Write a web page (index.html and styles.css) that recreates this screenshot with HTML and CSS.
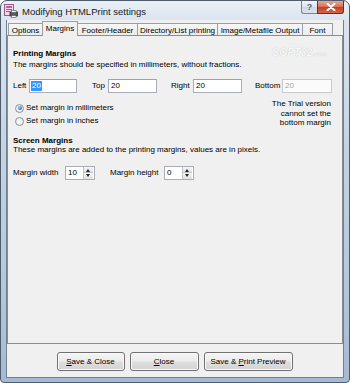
FILE: index.html
```html
<!DOCTYPE html>
<html>
<head>
<meta charset="utf-8">
<link rel="stylesheet" href="styles.css">
</head>
<body>
<div class="window">
  <div class="titlebar">
    <svg class="app-icon" width="14" height="14" viewBox="0 0 14 14">
      <rect x="0.5" y="0.5" width="9" height="11" fill="#f3d7ea" stroke="#9a5d86"/>
      <rect x="2" y="2" width="6" height="2" fill="#c0609a"/>
      <rect x="2" y="5" width="6" height="1" fill="#7b6bb5"/>
      <rect x="2" y="7" width="4" height="1" fill="#7b6bb5"/>
      <rect x="6" y="8" width="7.5" height="4" fill="#5a5a5a" stroke="#2c2c2c" stroke-width="0.8"/>
      <rect x="7.5" y="6.5" width="4.5" height="2" fill="#fff" stroke="#555" stroke-width="0.6"/>
      <rect x="7.5" y="11.5" width="4.5" height="2" fill="#fff" stroke="#555" stroke-width="0.6"/>
    </svg>
    <span class="title">Modifying HTMLPrint settings</span>
    <div class="caption-btns">
      <div class="cbtn help">?</div>
      <div class="cbtn close">
        <svg width="10" height="8" viewBox="0 0 10 8"><path d="M1.5 0.8 L8.5 7.2 M8.5 0.8 L1.5 7.2" stroke="#fff" stroke-width="2" stroke-linecap="round"/></svg>
      </div>
    </div>
  </div>
  <div class="client">
    <div class="tabs">
      <div class="tab t-options">Options</div>
      <div class="tab t-margins active">Margins</div>
      <div class="tab t-footer">Footer/Header</div>
      <div class="tab t-dir">Directory/List printing</div>
      <div class="tab t-image">Image/Metafile Output</div>
      <div class="tab t-font">Font</div>
    </div>
    <div class="panel">
      <span class="watermark">SOFT32<small>.com</small></span>
      <div class="heading">Printing Margins</div>
      <div class="desc">The margins should be specified in millimeters, without fractions.</div>
      <div class="inputs-row">
        <div class="field f-left"><span class="lbl">Left</span><span class="textbox"><span class="sel">20</span></span></div>
        <div class="field f-top"><span class="lbl">Top</span><span class="textbox">20</span></div>
        <div class="field f-right"><span class="lbl">Right</span><span class="textbox">20</span></div>
        <div class="field f-bottom"><span class="lbl">Bottom</span><span class="textbox disabled">20</span></div>
      </div>
      <div class="options-row">
        <div class="radios">
          <div class="radio-row"><span class="radio checked"></span><span>Set margin in millimeters</span></div>
          <div class="radio-row"><span class="radio"></span><span>Set margin in inches</span></div>
        </div>
        <div class="trial">The Trial version<br>cannot set the<br>bottom margin</div>
      </div>
      <div class="heading h-screen">Screen Margins</div>
      <div class="desc d-screen">These margins are added to the printing margins, values are in pixels.</div>
      <div class="spin-row">
        <span class="lbl l-width">Margin width</span>
        <span class="spinner"><span class="spin-val">10</span><span class="spin-btns"><span class="up"></span><span class="down"></span></span></span>
        <span class="lbl l-height">Margin height</span>
        <span class="spinner"><span class="spin-val">0</span><span class="spin-btns"><span class="up"></span><span class="down"></span></span></span>
      </div>
    </div>
    <div class="buttons">
      <div class="btn b-save"><span><u>S</u>ave &amp; Close</span></div>
      <div class="btn b-close"><span><u>C</u>lose</span></div>
      <div class="btn b-preview"><span>Save &amp; <u>P</u>rint Preview</span></div>
    </div>
  </div>
</div>
</body>
</html>
```
FILE: styles.css
```css
html, body {
  margin: 0;
  padding: 0;
}
body {
  width: 350px;
  height: 383px;
  overflow: hidden;
  background: #ffffff;
  font-family: "Liberation Sans", Arial, sans-serif;
  font-size: 8px;
  color: #000;
}
.window {
  width: 350px;
  height: 383px;
  box-sizing: border-box;
  border: 1px solid #4e5c6c;
  border-radius: 7px 7px 4px 4px;
  background: linear-gradient(to bottom, #e9eff5 0px, #dbe5ef 19px, #c3d3e4 40%, #b4c7dc 75%, #a6b9d2 100%);
  display: flex;
  flex-direction: column;
}
.titlebar {
  height: 19px;
  display: flex;
  align-items: center;
  flex: none;
}
.app-icon {
  margin-left: 3px;
  margin-top: 1px;
  flex: none;
}
.title {
  margin-left: 4px;
  font-size: 9.5px;
  color: #1a1a1a;
  margin-top: 1px;
}
.caption-btns {
  margin-left: auto;
  margin-right: 5px;
  align-self: flex-start;
  display: flex;
}
.cbtn {
  height: 13px;
  box-sizing: border-box;
  display: flex;
  align-items: center;
  justify-content: center;
}
.help {
  width: 16px;
  border: 1px solid #75859a;
  border-top: none;
  border-right: none;
  border-radius: 0 0 0 3px;
  background: linear-gradient(to bottom, #f3f6fa, #dbe3ec 50%, #cdd8e4 51%, #d9e3ee);
  color: #5a6878;
  font-size: 9px;
  font-weight: bold;
}
.close {
  width: 27px;
  border: 1px solid #6b2c22;
  border-top: none;
  border-radius: 0 0 3px 0;
  background: linear-gradient(to bottom, #e9a898, #d86d57 50%, #c43f24 51%, #d5654a);
}
.client {
  flex: 1;
  margin: 0 5px 4px 5px;
  background: #f0f0f0;
  border-left: 1px solid #6f8091;
  border-right: 1px solid #6f8091;
  border-bottom: 1px solid #6f8091;
  display: flex;
  flex-direction: column;
}
.tabs {
  height: 15px;
  display: flex;
  align-items: flex-end;
  padding-left: 1px;
  flex: none;
  position: relative;
  z-index: 2;
}
.tab {
  height: 12px;
  box-sizing: border-box;
  border: 1px solid #9b9ea6;
  border-bottom: none;
  background: linear-gradient(to bottom, #f7f7f7, #ebebeb);
  margin-left: -1px;
  display: flex;
  align-items: center;
  justify-content: center;
  font-size: 8px;
  padding-top: 1px;
}
.t-options { margin-left: 0; width: 35px; }
.t-margins { width: 36px; }
.t-footer { width: 61px; }
.t-dir { width: 81px; }
.t-image { width: 86px; }
.t-font { width: 31px; }
.tab.active {
  height: 15px;
  margin-bottom: -1px;
  background: #f0f0f0;
  padding-bottom: 2px;
  position: relative;
  z-index: 3;
}
.panel {
  position: relative;
  height: 309px;
  flex: none;
  box-sizing: border-box;
  border: 1px solid #898c95;
  background: #f0f0f0;
  padding: 13px 11px 0 5px;
  line-height: 10px;
}
.watermark {
  position: absolute;
  left: 264px;
  top: 12px;
  font-size: 10px;
  font-weight: bold;
  font-style: italic;
  color: #f7f7f7;
  text-shadow: 0 0 1px #b8b8b8;
  letter-spacing: 0.5px;
}
.watermark small {
  font-size: 6px;
  letter-spacing: 0;
}
.heading {
  font-weight: bold;
  height: 10px;
}
.desc {
  margin-top: 1px;
  height: 10px;
}
.inputs-row {
  display: flex;
  align-items: center;
  margin-top: 9px;
  height: 14px;
}
.field {
  display: flex;
  align-items: center;
}
.textbox {
  height: 14px;
  box-sizing: border-box;
  border: 1px solid #a9adb5;
  border-top-color: #9da2a8;
  background: #fff;
  display: flex;
  align-items: center;
  padding-left: 2px;
  line-height: 10px;
}
.sel {
  background: #3399ff;
  color: #fff;
  padding: 0 1px;
  margin-left: -1px;
}
.textbox.disabled {
  background: #fbfbfb;
  color: #a6a6a6;
  border-color: #c9cbce;
}
.f-left .lbl { width: 16px; }
.f-left .textbox { width: 48px; }
.f-top { margin-left: 15px; }
.f-top .lbl { width: 16px; }
.f-top .textbox { width: 49px; }
.f-right { margin-left: 14px; }
.f-right .lbl { width: 22px; }
.f-right .textbox { width: 49px; }
.f-bottom { margin-left: 13px; }
.f-bottom .lbl { width: 27px; }
.f-bottom .textbox { width: 50px; }
.options-row {
  display: flex;
  justify-content: space-between;
  align-items: flex-start;
}
.radios {
  margin-top: 9px;
  display: flex;
  flex-direction: column;
  gap: 1px;
}
.radio-row {
  display: flex;
  align-items: center;
  height: 12px;
}
.radio {
  width: 9px;
  height: 9px;
  box-sizing: border-box;
  border-radius: 50%;
  border: 1px solid #8f959c;
  background: radial-gradient(circle at 50% 50%, #ffffff 0, #eef0f2 50%, #d2d6da 100%);
  margin-left: 2px;
  margin-right: 2px;
  position: relative;
  flex: none;
}
.radio.checked::after {
  content: "";
  position: absolute;
  left: 1.5px;
  top: 1.5px;
  width: 4px;
  height: 4px;
  border-radius: 50%;
  background: radial-gradient(circle at 40% 35%, #8fd0ff 0, #2f7fe0 60%, #1a55b8 100%);
}
.trial {
  margin-top: 6px;
  text-align: right;
  line-height: 9.5px;
}
.h-screen {
  margin-top: 8px;
}
.d-screen {
  margin-top: -1px;
}
.spin-row {
  display: flex;
  align-items: center;
  margin-top: 11px;
  height: 14px;
}
.l-width { width: 52px; }
.l-height { width: 54px; margin-left: 15px; }
.spinner {
  width: 30px;
  height: 14px;
  box-sizing: border-box;
  border: 1px solid #a9adb5;
  background: #fff;
  display: flex;
  align-items: stretch;
}
.spin-val {
  flex: 1;
  padding-left: 2px;
  display: flex;
  align-items: center;
}
.spin-btns {
  width: 9px;
  display: flex;
  flex-direction: column;
  border-left: 1px solid #c0c4c9;
  margin: 0 1px 0 0;
}
.spin-btns span {
  flex: 1;
  position: relative;
  background: linear-gradient(to bottom, #f6f6f6, #e2e2e2);
}
.spin-btns .up { border-bottom: 1px solid #c0c4c9; }
.spin-btns .up::after,
.spin-btns .down::after {
  content: "";
  position: absolute;
  left: 2px;
  width: 0;
  height: 0;
  border-left: 2.5px solid transparent;
  border-right: 2.5px solid transparent;
}
.spin-btns .up::after {
  top: 2px;
  border-bottom: 3px solid #222;
}
.spin-btns .down::after {
  top: 1px;
  border-top: 3px solid #222;
}
.buttons {
  flex: 1;
  display: flex;
  justify-content: center;
  align-items: flex-start;
  gap: 5px;
  padding-top: 8px;
  padding-right: 1px;
}
.btn {
  height: 19px;
  box-sizing: border-box;
  border: 1px solid #707070;
  border-radius: 3px;
  background: linear-gradient(to bottom, #f4f4f4 0%, #ececec 48%, #dedede 52%, #d3d3d3 100%);
  box-shadow: inset 0 0 0 1px #fbfbfb;
  display: flex;
  align-items: center;
  justify-content: center;
  font-size: 8px;
}
.b-save { width: 68px; }
.b-close { width: 69px; }
.b-preview { width: 89px; }
```
